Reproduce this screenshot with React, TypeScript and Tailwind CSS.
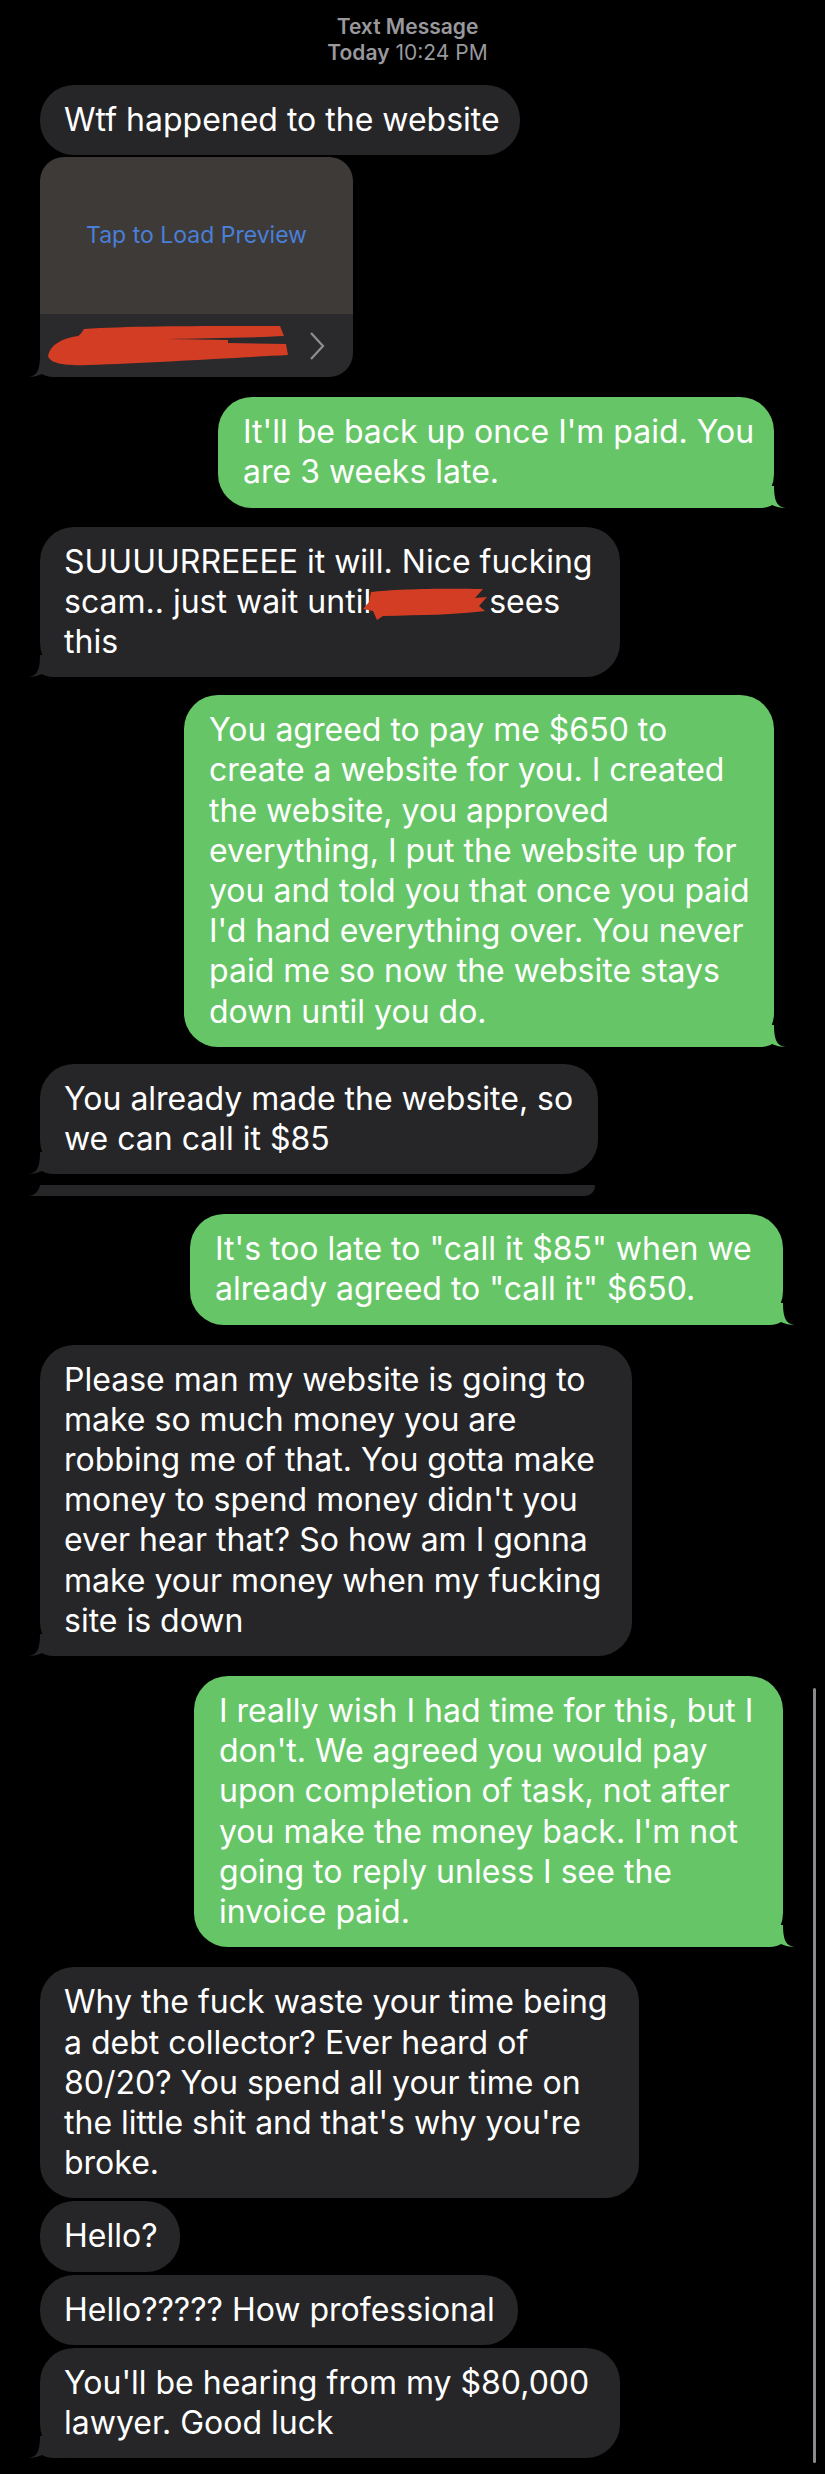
import React from "react";

const FONT = { fontFamily: "Inter, 'Noto Sans', 'Liberation Sans', sans-serif" };

// little hook under the last bubble of a run
function Tail({ side, color }: { side: "left" | "right"; color: string }) {
  return (
    <svg
      viewBox="0 0 50 22"
      className={`absolute bottom-0 w-[50px] h-[22px] ${side === "left" ? "left-[-12px]" : "right-[-12px] -scale-x-100"}`}
    >
      <path d="M0 22 C8 21 12 17 12 0 L50 0 L50 22 L26 22 C20 22 16 20.5 14 19 C10 21 5 22 0 22 Z" fill={color} />
    </svg>
  );
}

function Gray({ lines, w, tail, className = "" }: any) {
  return (
    <div className={`relative self-start ml-[40px] ${w} ${className}`}>
      <div className="relative z-10 bg-[#262628] rounded-[34px] px-[24px] py-[15px] text-white text-[32px] leading-[40.2px]">
        {lines.map((l: any, i: number) => (
          <div key={i} className="whitespace-nowrap">{l}</div>
        ))}
      </div>
      {tail && <Tail side="left" color="#262628" />}
    </div>
  );
}

function Green({ lines, w, mr, className = "" }: any) {
  return (
    <div className={`relative self-end ${mr} ${w} ${className}`}>
      <div className="relative z-10 bg-[#66c667] rounded-[34px] px-[25px] py-[15px] text-white text-[32px] leading-[40.2px]">
        {lines.map((l: any, i: number) => (
          <div key={i} className="whitespace-nowrap">{l}</div>
        ))}
      </div>
      <Tail side="right" color="#66c667" />
    </div>
  );
}

function Scribble() {
  return (
    <svg viewBox="0 0 240 40" className="w-[240px] h-[40px]">
      <path
        d="M36 3 C80 0 150 0 232 0 L236 10 C200 12 150 12 120 13 L180 14 L180 17 L238 18 L240 29 C180 32 100 37 40 39 C20 40 2 38 0 30 C2 19 14 12 30 10 C33 8 34 6 36 3 Z"
        fill="#d33d24"
      />
    </svg>
  );
}

function Blob() {
  return (
    <svg viewBox="0 0 124 32" className="inline-block align-middle w-[124px] h-[32px] ml-[-8px] mr-[2px]">
      <path
        d="M8 4 C30 1 80 0 120 1 L112 10 L124 9 L116 18 L122 23 C90 27 60 27 20 28 L14 32 L10 23 L0 21 L6 14 Z"
        fill="#d33d24"
      />
    </svg>
  );
}

export default function App() {
  return (
    <div className="min-h-screen bg-black relative pb-[20px]" style={FONT}>
      {/* header */}
      <div className="pt-[14px] pr-[10px] text-center text-[#98989d] text-[21px] leading-[26px]">
        <div className="font-semibold">Text Message</div>
        <div>
          <span className="font-semibold">Today</span> 10:24 PM
        </div>
      </div>

      <div className="flex flex-col mt-[19px]">
        <Gray lines={["Wtf happened to the website"]} w="w-[480px]" />

        {/* link preview */}
        <div className="relative self-start ml-[40px] mt-[2px] w-[313px]">
          <div className="relative z-10 rounded-[24px] overflow-hidden">
            <div className="h-[157px] bg-[#3d3a38] flex items-center justify-center text-[23px] text-[#4a7fd8]">
              Tap to Load Preview
            </div>
            <div className="h-[63px] bg-[#2a2a2c] flex items-center pl-[8px] pr-[28px] justify-between">
              <Scribble />
              <svg viewBox="0 0 16 30" className="w-[16px] h-[30px]">
                <path d="M2 2 L14 15 L2 28" stroke="#8e8e93" strokeWidth="2.2" fill="none" />
              </svg>
            </div>
          </div>
          <Tail side="left" color="#2a2a2c" />
        </div>

        <Green
          lines={["It'll be back up once I'm paid. You", "are 3 weeks late."]}
          w="w-[556px]"
          mr="mr-[51px]"
          className="mt-[20px]"
        />

        <Gray
          lines={[
            "SUUUURREEEE it will. Nice fucking",
            <>
              scam.. just wait until<Blob />sees
            </>,
            "this",
          ]}
          w="w-[580px]"
          tail
          className="mt-[19px]"
        />

        <Green
          lines={[
            "You agreed to pay me $650 to",
            "create a website for you. I created",
            "the website, you approved",
            "everything, I put the website up for",
            "you and told you that once you paid",
            "I'd hand everything over. You never",
            "paid me so now the website stays",
            "down until you do.",
          ]}
          w="w-[590px]"
          mr="mr-[51px]"
          className="mt-[18px]"
        />

        <Gray
          lines={["You already made the website, so", "we can call it $85"]}
          w="w-[558px]"
          tail
          className="mt-[17px]"
        />

        {/* clipped bubble edge left over from stitching */}
        <div className="relative self-start ml-[40px] mt-[11px] w-[555px]">
          <div className="relative z-10 h-[11px] bg-[#262628] rounded-br-[10px]" />
          <svg viewBox="0 0 22 11" className="absolute bottom-0 left-[-11px] w-[22px] h-[11px]">
            <path d="M0 11 C6 10 10 6 11 0 L22 0 L22 11 Z" fill="#262628" />
          </svg>
        </div>

        <Green
          lines={['It\'s too late to "call it $85" when we', 'already agreed to "call it" $650.']}
          w="w-[593px]"
          mr="mr-[42px]"
          className="mt-[18px]"
        />

        <Gray
          lines={[
            "Please man my website is going to",
            "make so much money you are",
            "robbing me of that. You gotta make",
            "money to spend money didn't you",
            "ever hear that? So how am I gonna",
            "make your money when my fucking",
            "site is down",
          ]}
          w="w-[592px]"
          tail
          className="mt-[20px]"
        />

        <Green
          lines={[
            "I really wish I had time for this, but I",
            "don't. We agreed you would pay",
            "upon completion of task, not after",
            "you make the money back. I'm not",
            "going to reply unless I see the",
            "invoice paid.",
          ]}
          w="w-[589px]"
          mr="mr-[42px]"
          className="mt-[20px]"
        />

        <Gray
          lines={[
            "Why the fuck waste your time being",
            "a debt collector? Ever heard of",
            "80/20? You spend all your time on",
            "the little shit and that's why you're",
            "broke.",
          ]}
          w="w-[599px]"
          className="mt-[20px]"
        />
        <Gray lines={["Hello?"]} w="w-[140px]" className="mt-[3px]" />
        <Gray lines={["Hello????? How professional"]} w="w-[478px]" className="mt-[3px]" />
        <Gray
          lines={["You'll be hearing from my $80,000", "lawyer. Good luck"]}
          w="w-[580px]"
          tail
          className="mt-[3px]"
        />
      </div>

      {/* scroll indicator */}
      <div className="absolute right-[9px] top-[1688px] w-[3px] h-[775px] rounded-full bg-[#8a8a8e]" />
    </div>
  );
}
